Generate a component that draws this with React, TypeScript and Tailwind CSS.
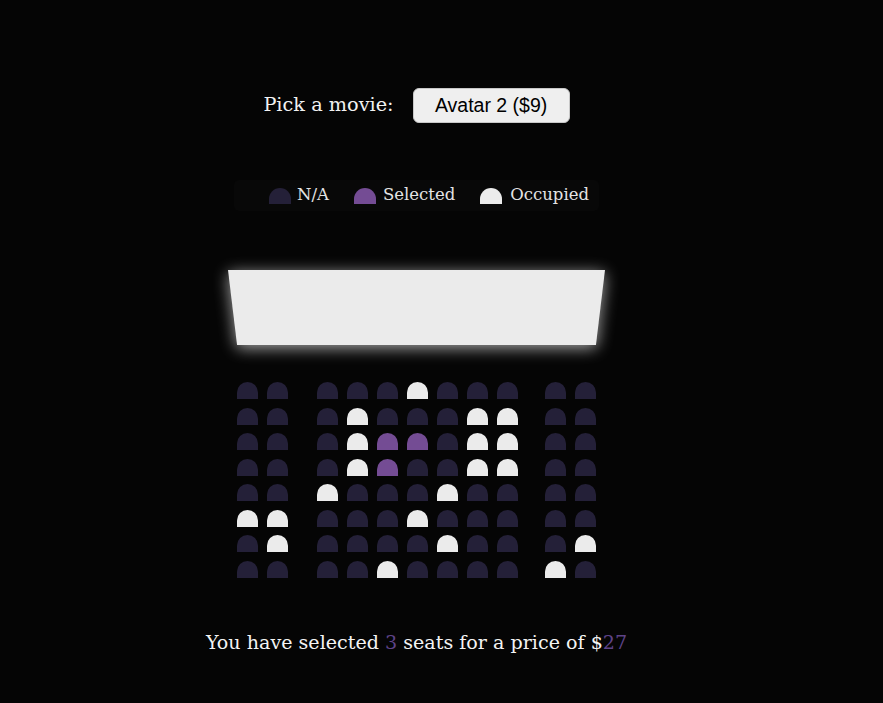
import React from "react";

type Seat = "n" | "s" | "o";

const rows: string[] = [
  "nnnnnonnnnn",
  "nnnonnnoonn",
  "nnnossnoonn",
  "nnnosnnoonn",
  "nnonnnonnnn",
  "oonnnonnnnn",
  "nonnnnonnno",
  "nnnnonnnnon",
];

const seatColor: Record<Seat, string> = {
  n: "bg-[#242038]",
  s: "bg-[#744c94]",
  o: "bg-[#ebebeb]",
};

const SeatBox: React.FC<{ kind: Seat; className?: string }> = ({ kind, className = "" }) => (
  <div className={`h-[17px] w-[21px] rounded-t-[11px] ${seatColor[kind]} ${className}`} />
);

const App: React.FC = () => {
  return (
    <div
      className="min-h-[703px] w-full bg-[#050505] text-white"
      style={{ fontFamily: '"DejaVu Serif", serif' }}
    >
      <div className="flex w-[833px] flex-col items-center pt-[88px]">
        <div className="flex h-[35px] items-center">
          <label className="mr-[19px] text-[19.3px] text-[#f2f2f2]">Pick a movie:</label>
          <div
            className="flex h-[35px] w-[157px] items-center justify-center rounded-[6px] border border-[#c8c8c8] bg-[#efefef] text-[19.5px] text-black"
            style={{ fontFamily: '"Liberation Sans", Arial, sans-serif' }}
          >
            Avatar 2 ($9)
          </div>
        </div>

        <ul className="mt-[57px] flex h-[31px] w-[365px] items-center rounded-[5px] bg-[#080808] pl-[35px] text-[16.5px] text-[#e4e4e4]">
          <li className="flex items-center">
            <div className="h-[16px] w-[22px] rounded-t-[11px] bg-[#242038]" />
            <span className="ml-[6px]">N/A</span>
          </li>
          <li className="ml-[25px] flex items-center">
            <div className="h-[16px] w-[22px] rounded-t-[11px] bg-[#744c94]" />
            <span className="ml-[7px]">Selected</span>
          </li>
          <li className="ml-[25px] flex items-center">
            <div className="h-[16px] w-[22px] rounded-t-[11px] bg-[#ebebeb]" />
            <span className="ml-[8px]">Occupied</span>
          </li>
        </ul>

        <div className="mt-[59px] drop-shadow-[0_3px_8px_rgba(255,255,255,0.65)]">
          <div className="h-[75px] w-[377px] bg-[#ebebeb] [clip-path:polygon(0_0,100%_0,97.6%_100%,2.4%_100%)]" />
        </div>

        <div className="mt-[37px] flex flex-col gap-[8.5px]">
          {rows.map((row, r) => (
            <div key={r} className="flex gap-[9px]">
              {row.split("").map((k, c) => (
                <SeatBox
                  key={c}
                  kind={k as Seat}
                  className={c === 2 ? "ml-[20px]" : c === 9 ? "ml-[18px]" : ""}
                />
              ))}
            </div>
          ))}
        </div>

        <p className="mt-[50px] text-[19.1px] leading-[30px] text-[#f4f4f4]">
          You have selected <span className="text-[#5e4388]">3</span> seats for a price of $
          <span className="text-[#5e4388]">27</span>
        </p>
      </div>
    </div>
  );
};

export default App;
